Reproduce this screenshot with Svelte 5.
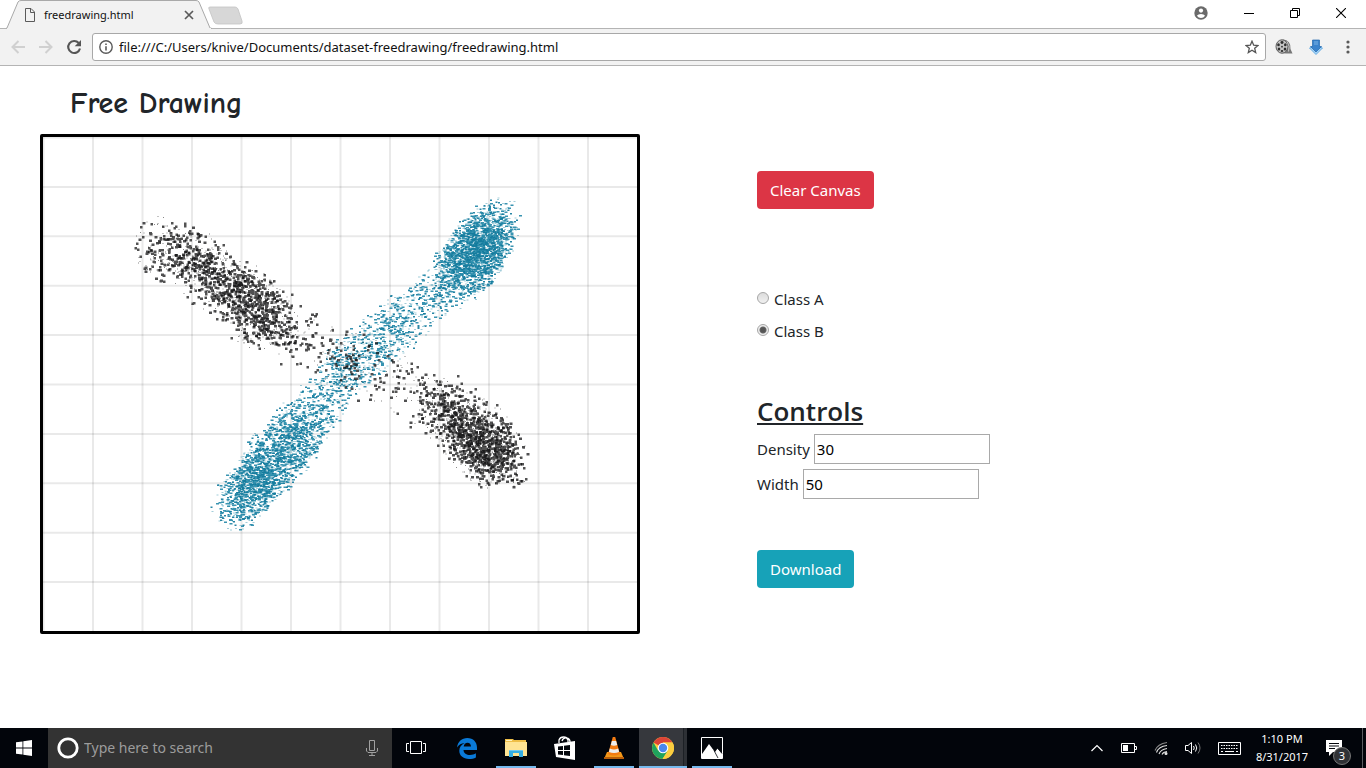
<script>
  let url = $state('file:///C:/Users/knive/Documents/dataset-freedrawing/freedrawing.html');
  let query = $state('');
  let selected = $state('B');
  let density = $state('30');
  let width = $state('50');
  let cleared = $state(false);

  // Small seeded generator, so that the spray is the same on every load.
  function generator(seed) {
    let s = seed;
    return () => {
      s = (s + 0x6d2b79f5) | 0;
      let t = Math.imul(s ^ (s >>> 15), 1 | s);
      t = (t + Math.imul(t ^ (t >>> 7), 61 | t)) ^ t;
      return ((t ^ (t >>> 14)) >>> 0) / 4294967296;
    };
  }

  // Each stroke segment: x1, y1, x2, y2, brush radius, number of dots.
  const strokeA = [
    [114, 105, 148, 123, 26, 200],
    [148, 123, 202, 163, 26, 470],
    [202, 163, 230, 186, 27, 400],
    [230, 186, 300, 220, 26, 110],
    [300, 220, 375, 258, 26, 100],
    [392, 264, 427, 294, 26, 400],
    [427, 294, 458, 327, 27, 720]
  ];
  const strokeB = [
    [453, 84, 442, 104, 29, 420],
    [442, 104, 418, 136, 34, 1300],
    [418, 136, 355, 188, 30, 330],
    [355, 188, 302, 233, 30, 380],
    [302, 233, 260, 290, 28, 300],
    [260, 290, 222, 334, 34, 950],
    [222, 334, 192, 371, 29, 780]
  ];

  function spray(segments, rand, share, w, h, soft) {
    let d = '';
    for (const [x1, y1, x2, y2, r, n] of segments) {
      for (let i = 0; i < n * share; i++) {
        const t = rand();
        let dx = rand() * 2 - 1;
        let dy = rand() * 2 - 1;
        // Part of the dots gather near the middle of the brush.
        if (rand() < soft) {
          dx = (dx + rand() * 2 - 1) / 2;
          dy = (dy + rand() * 2 - 1) / 2;
        }
        if (soft > 0.5 && dx * dx + dy * dy > 0.9) {
          dx *= 0.6;
          dy *= 0.6;
        }
        const x = Math.round((x1 + (x2 - x1) * t + dx * r) * 2) / 2;
        const y = Math.round((y1 + (y2 - y1) * t + dy * r) * 2) / 2;
        d += `M${x - 1} ${y - 1}h${w}v${h}h${-w}z`;
      }
    }
    return d;
  }

  const rand = generator(20170831);
  const layers = [
    { d: spray(strokeB, rand, 0.55, 2, 1, 0.6), fill: '#1681a3', opacity: 0.4 },
    { d: spray(strokeB, rand, 0.42, 3, 1.5, 0.7), fill: '#1681a3', opacity: 0.85 },
    { d: spray(strokeB, rand, 0.34, 2, 1.5, 0.7), fill: '#127a9c', opacity: 0.9 },
    { d: spray(strokeA, rand, 0.5, 1, 1, 0.1), fill: '#111', opacity: 0.5 },
    { d: spray(strokeA, rand, 0.5, 2.5, 2.5, 0.3), fill: '#111', opacity: 0.72 },
    { d: spray(strokeA, rand, 0.32, 3, 2.5, 0.4), fill: '#0c0c0e', opacity: 0.72 }
  ];

  const columns = Array.from({ length: 12 }, (_, i) => i * 49.5 + 0.5);
  const rows = Array.from({ length: 10 }, (_, i) => i * 49.4 + 0.5);
</script>

<div class="screen">
  <header>
    <div class="tabs">
      <div class="tab">
        <svg class="tab-shape" width="206" height="29" viewBox="0 0 206 29" aria-hidden="true">
          <path d="M0 28.5 L1 28 L12 2 Q13 .5 15 .5 H190 Q192 .5 193 2 L204 28 L206 28.5" fill="#f2f2f2" stroke="#a9a9a9" />
          <path d="M1 28.5H205" stroke="#f2f2f2" />
        </svg>
        <svg width="12" height="14" viewBox="0 0 12 14" fill="none" stroke="#5a5a5a" aria-hidden="true">
          <path d="M1.5 .5H7L10.5 4V13.5H1.5ZM6.5 .5V4.5H10.5" />
        </svg>
        <span class="tab-title">freedrawing.html</span>
        <button class="plain" aria-label="Close tab">
          <svg width="10" height="10" viewBox="0 0 10 10" stroke="#5a5a5a" stroke-width="1.7"><path d="M1 1L9 9M9 1L1 9" /></svg>
        </button>
      </div>
      <button class="plain new-tab" aria-label="New tab">
        <svg width="36" height="19" viewBox="0 0 36 19">
          <path d="M2 1H27Q29 1 30 3L34 15Q35 18 32 18H10Q7 18 6 16L1 3Q0 1 2 1Z" fill="#d7d7d7" stroke="#c3c3c3" stroke-width=".8" />
        </svg>
      </button>
      <div class="window-buttons">
        <button class="plain" aria-label="Profile">
          <svg width="14" height="14" viewBox="0 0 14 14"><circle cx="7" cy="7" r="6.7" fill="#6a6a6a" /><circle cx="7" cy="4.6" r="2.1" fill="#fff" /><path d="M2.9 9.8Q4 7.9 7 7.9T11.1 9.8Q9.5 12 7 12T2.9 9.8Z" fill="#fff" /></svg>
        </button>
        <button class="plain" aria-label="Minimize">
          <svg width="10" height="10" viewBox="0 0 10 10"><path d="M0 5.5H10" stroke="#000" /></svg>
        </button>
        <button class="plain" aria-label="Restore">
          <svg width="10" height="10" viewBox="0 0 10 10" fill="none" stroke="#000"><path d="M.5 2.5H7.5V9.5H.5ZM2.5 2V.5H9.5V7.5H8" /></svg>
        </button>
        <button class="plain" aria-label="Close">
          <svg width="10" height="10" viewBox="0 0 10 10" stroke="#000" stroke-width="1.1"><path d="M0 0L10 10M10 0L0 10" /></svg>
        </button>
      </div>
    </div>

    <div class="toolbar">
      <button class="plain nav" aria-label="Back">
        <svg width="16" height="16" viewBox="0 0 16 16" fill="none" stroke="#d0d0d0" stroke-width="2"><path d="M15 8H3M8.5 2L2.5 8L8.5 14" /></svg>
      </button>
      <button class="plain nav" aria-label="Forward">
        <svg width="16" height="16" viewBox="0 0 16 16" fill="none" stroke="#d0d0d0" stroke-width="2"><path d="M1 8H13M7.500 2L13.500 8L7.500 14" /></svg>
      </button>
      <button class="plain nav" aria-label="Reload">
        <svg width="16" height="16" viewBox="0 0 16 16"><path d="M12.700 4A6 6 0 1 0 14 9.500" fill="none" stroke="#555" stroke-width="2.100" /><path d="M15 1V7.300H8.700Z" fill="#555" /></svg>
      </button>
      <div class="address">
        <svg width="14" height="14" viewBox="0 0 14 14" aria-hidden="true"><circle cx="7" cy="7" r="6.200" fill="none" stroke="#5a5a5a" stroke-width="1.400" /><path d="M7 6.200V10.500M7 3.400V5" stroke="#5a5a5a" stroke-width="1.600" /></svg>
        <input type="text" aria-label="Address" bind:value={url} />
        <button class="plain" aria-label="Bookmark this page">
          <svg width="14" height="14" viewBox="0 0 14 14"><path d="M7 1.200L8.700 5.200L13 5.500L9.700 8.300L10.700 12.600L7 10.300L3.300 12.600L4.300 8.300L1 5.500L5.300 5.200Z" fill="none" stroke="#555" stroke-width="1.300" /></svg>
        </button>
      </div>
      <button class="plain tool" aria-label="Film reel extension">
        <svg width="18" height="16" viewBox="0 0 18 16">
          <path d="M8 .5Q16 1 15.500 10L17.500 14.500H11L6 14Z" fill="#777" />
          <ellipse cx="7" cy="7.500" rx="6" ry="6.700" fill="#c4c4c4" stroke="#5a5a5a" />
          <g fill="#2d2d2d"><ellipse cx="7" cy="3.500" rx="1.500" ry="1.400" /><ellipse cx="3.500" cy="5.800" rx="1.300" ry="1.500" /><ellipse cx="4" cy="10" rx="1.300" ry="1.500" /><ellipse cx="10.300" cy="5.800" rx="1.300" ry="1.500" /><ellipse cx="10" cy="10" rx="1.300" ry="1.500" /><ellipse cx="7" cy="12" rx="1.300" ry="1.100" /><circle cx="7" cy="7.700" r=".9" /></g>
          <path d="M12 2.500Q15.500 7 13.500 12.500" stroke="#c9c9c9" fill="none" />
        </svg>
      </button>
      <button class="plain tool" aria-label="Download extension">
        <svg width="14" height="16" viewBox="0 0 14 16">
          <path d="M.5 9L7 15.500L13.500 9L11 8H3Z" fill="#a5d3f6" stroke="#4f9fe0" stroke-width=".8" />
          <path d="M3.500 1H10.500V7.500H12.500L7 13L1.500 7.500H3.500Z" fill="#3a83cc" stroke="#2468ae" stroke-width=".7" />
          <path d="M5 2H9V6H5Z" fill="#5a9bd8" />
        </svg>
      </button>
      <button class="plain tool" aria-label="Menu">
        <svg width="4" height="14" viewBox="0 0 4 14" fill="#5a5a5a"><circle cx="2" cy="2" r="1.600" /><circle cx="2" cy="7" r="1.600" /><circle cx="2" cy="12" r="1.600" /></svg>
      </button>
    </div>
  </header>

  <main>
    <section class="board">
      <h1>Free Drawing</h1>
      <div class="canvas">
        <svg viewBox="0 0 594 494" preserveAspectRatio="none" role="img" aria-label="Drawing canvas">
          <g stroke="#000" stroke-opacity=".085" stroke-width="2">
            {#each columns as x}<path d="M{x} 0V494" />{/each}
            {#each rows as y}<path d="M0 {y}H594" />{/each}
          </g>
          {#if !cleared}
            {#each layers as layer}
              <path d={layer.d} fill={layer.fill} fill-opacity={layer.opacity} />
            {/each}
          {/if}
        </svg>
      </div>
    </section>

    <section class="panel">
      <button class="btn danger" onclick={() => (cleared = true)}>Clear Canvas</button>
      <div class="choices">
        <label><input type="radio" name="class" value="A" bind:group={selected} />Class A</label>
        <label><input type="radio" name="class" value="B" bind:group={selected} />Class B</label>
      </div>
      <h2>Controls</h2>
      <div class="fields">
        <label>Density <input type="text" bind:value={density} /></label>
        <label>Width <input type="text" bind:value={width} /></label>
      </div>
      <button class="btn info">Download</button>
    </section>
  </main>

  <footer>
    <button class="plain start" aria-label="Start">
      <svg width="16" height="16" viewBox="0 0 16 16" fill="#fff"><path d="M0 2.300L6.500 1.400V7.500H0ZM7.300 1.300L16 0V7.500H7.300ZM0 8.400H6.500V14.600L0 13.700ZM7.300 8.400H16V16L7.300 14.700Z" /></svg>
    </button>
    <div class="search">
      <svg width="22" height="22" viewBox="0 0 22 22" aria-hidden="true"><circle cx="11" cy="11" r="9.200" fill="none" stroke="#fff" stroke-width="2.800" /></svg>
      <input type="text" aria-label="Search" placeholder="Type here to search" bind:value={query} />
      <button class="plain" aria-label="Voice search">
        <svg width="12" height="16" viewBox="0 0 12 16" fill="none" stroke="#a0a0a0"><path d="M3.500 .5H8.500V10.500H3.500ZM.5 8V11L2 12.500H10L11.500 11V8M6 12.500V15.500M3 15.500H9" /></svg>
      </button>
    </div>

    <button class="plain app" aria-label="Task view">
      <svg width="20" height="14" viewBox="0 0 20 14" fill="none" stroke="#fff"><path d="M4.500 .5H15.500V12.500H4.500ZM3 2.500H.5V10.500H3M17 2.500H19.500V10.500H17" /></svg>
    </button>
    <div class="pinned">
      <button class="plain app" aria-label="Edge">
        <svg width="20" height="21" viewBox="0 0 20 21"><path d="M0 9.500C.8 3.600 4.800 0 10.300 0C16.300 0 20 4 20 9.800V12H6.500C6.700 15.300 9.500 17 13 17C15.300 17 17.300 16.300 18.900 15.300V19.400C17 20.500 14.700 21 12 21C6 21 2.300 17.500 2.300 12.800C2.300 9.300 4.200 6.600 7.600 5C4.400 5.200 1.700 6.700 0 9.500ZM6.700 8.600H14C13.900 6 12.700 4.700 10.500 4.700C8.500 4.700 7 6.200 6.700 8.600Z" fill="#0a7ad8" fill-rule="evenodd" /></svg>
      </button>
      <button class="plain app open" aria-label="File Explorer">
        <svg width="22" height="20" viewBox="0 0 22 20"><path d="M0 1H8L9 2H21V18H0Z" fill="#efbf48" /><path d="M0 4H22V18H0Z" fill="#ffe493" /><path d="M1 2H7V3H1Z" fill="#fff2c0" /><path d="M4 12H18V19H14V15H8V19H4Z" fill="#35aee4" /><path d="M4 12H18V13H4Z" fill="#72c9ee" /></svg>
      </button>
      <button class="plain app" aria-label="Store">
        <svg width="22" height="24" viewBox="0 0 22 24"><path d="M5 7V4Q6 1 9.500 1T14 4V6M8 5Q9 1.500 12.500 2T16 6" fill="none" stroke="#fff" stroke-width="1.300" /><path d="M0 8L21 5V24L2 21Z" fill="#fff" /><path d="M4 10.500L9 10V14H4ZM10 9.800L16 9V14H10ZM4 15H9V19L4 18.500ZM10 15H16V20L10 19.200Z" fill="#04070c" /></svg>
      </button>
      <button class="plain app open" aria-label="VLC">
        <svg width="20" height="22" viewBox="0 0 20 22"><path d="M3 15H17L20 22H0Z" fill="#f49819" /><path d="M0 20H20V22H0Z" fill="#b95d08" /><path d="M8.800 0H11.200L16 17Q10 20 4 17Z" fill="#f47c12" /><path d="M7.900 4H12.100L13.200 8Q10 9.300 6.800 8ZM5.800 11.500Q10 13.300 14.200 11.500L15.100 15Q10 17 4.900 15Z" fill="#eee" /></svg>
      </button>
      <button class="plain app active" aria-label="Chrome">
        <svg width="22" height="22" viewBox="0 0 22 22"><circle cx="11" cy="11" r="11" fill="#fccd3f" /><path d="M11 11L1.500 5.500A11 11 0 0 1 20.500 5.500H11Z" fill="#dc4437" /><path d="M1.500 5.500A11 11 0 0 0 10.500 22L15.800 13.800L11 11L6 13.500Z" fill="#1fa35d" /><path d="M11 5.500H20.500A11 11 0 0 1 10.500 22L15.800 13.800Z" fill="#fccd3f" /><circle cx="11" cy="11" r="5.300" fill="#fff" /><circle cx="11" cy="11" r="4.200" fill="#4a87ee" /></svg>
      </button>
      <button class="plain app open" aria-label="Photos">
        <svg width="22" height="22" viewBox="0 0 22 22"><path d="M.5 .5H21.500V21.500H.5Z" fill="#04070c" stroke="#fff" /><path d="M1 17L8 7L14 15L16.500 11.500L21 16.500V21H1Z" fill="#fff" /><path d="M11.500 11L14.500 8.500L21 16.500M13 13.500L17 21" fill="none" stroke="#04070c" stroke-width=".8" /></svg>
      </button>
    </div>

    <div class="tray">
      <button class="plain" aria-label="Show hidden icons">
        <svg width="12" height="8" viewBox="0 0 12 8" fill="none" stroke="#fff" stroke-width="1.200"><path d="M.5 7L6 1.500L11.500 7" /></svg>
      </button>
      <button class="plain" aria-label="Battery">
        <svg width="16" height="10" viewBox="0 0 16 10"><path d="M.5 .5H13.500V9.500H.5ZM14 3.500H15.500V6.500H14" fill="none" stroke="#fff" /><path d="M2 2H7V8H2Z" fill="#fff" /></svg>
      </button>
      <button class="plain" aria-label="Network">
        <svg width="14" height="14" viewBox="0 0 14 14" fill="none" stroke="#ddd" stroke-width="1.100"><path d="M1 9.500Q3.500 3 13 1.500" stroke="#888" /><path d="M2.500 11.500Q4.500 5.500 13 4.500M5 13Q6.500 8.500 13 7.500M8 13.500Q9 11 13 10.500" /><circle cx="12" cy="12.500" r="1" fill="#fff" /></svg>
      </button>
      <button class="plain" aria-label="Volume">
        <svg width="17" height="14" viewBox="0 0 17 14" fill="none" stroke="#fff"><path d="M.5 4.500H3L6.500 1.500V12.500L3 9.500H.5ZM8.500 5Q10 7 8.500 9M10.500 3.500Q13 7 10.500 10.500" /><path d="M13 1.500Q17 7 13 12.500" stroke="#777" /></svg>
      </button>
      <button class="plain" aria-label="Touch keyboard">
        <svg width="23" height="13" viewBox="0 0 23 13" fill="none" stroke="#fff"><path d="M.5 .5H22.500V12.500H.5Z" /><path d="M3 3.500H20M3 6.500H20" stroke-dasharray="1.500 1" /><path d="M3 9.500H5M7 9.500H16M18 9.500H20" /></svg>
      </button>
      <div class="clock"><span>1:10 PM</span><span>8/31/2017</span></div>
      <button class="plain notice" aria-label="Notifications">
        <svg width="16" height="16" viewBox="0 0 16 16"><path d="M0 0H16V12H7L3 16V12H0Z" fill="#fff" /><path d="M3 3.500H13M3 6H13M3 8.500H9" stroke="#04070c" /></svg>
        <span class="badge">3</span>
      </button>
      <button class="plain desktop" aria-label="Show desktop"></button>
    </div>
  </footer>
</div>

<style>
  :global(body) {
    margin: 0;
    background: #fff;
  }
  .screen {
    min-height: 100vh;
    display: flex;
    flex-direction: column;
    font-family: 'Segoe UI', 'Noto Sans', 'Open Sans', sans-serif;
    font-size: 15px;
    line-height: 24px;
    color: #212529;
  }
  svg {
    display: block;
    flex: none;
  }
  .plain {
    display: flex;
    align-items: center;
    justify-content: center;
    padding: 0;
    border: 0;
    background: none;
    color: inherit;
    font: inherit;
  }

  .tabs {
    display: flex;
    height: 28px;
    padding: 0 2px 0 6px;
  }
  .tab {
    position: relative;
    z-index: 1;
    display: flex;
    align-items: center;
    box-sizing: border-box;
    width: 206px;
    height: 29px;
    padding: 0 18px;
  }
  .tab-shape {
    position: absolute;
    inset: 0;
    z-index: -1;
  }
  .tab-title {
    flex: 1;
    margin-left: 8px;
    font-size: 11px;
    line-height: 16px;
    color: #111;
  }
  .new-tab {
    height: 31px;
    margin-left: -4px;
  }
  .window-buttons {
    display: flex;
    margin-left: auto;
  }
  .window-buttons button {
    width: 46px;
    height: 26px;
  }
  .window-buttons button:first-child {
    width: 50px;
  }
  .toolbar {
    display: flex;
    align-items: center;
    box-sizing: border-box;
    height: 38px;
    padding: 0 2px 0 4px;
    background: #f2f2f2;
    border-top: 1px solid #b4b4b4;
    border-bottom: 1px solid #b4b4b4;
  }
  .nav {
    width: 28px;
    height: 28px;
  }
  .tool {
    width: 32px;
    height: 28px;
  }
  .address {
    flex: 1;
    display: flex;
    align-items: center;
    gap: 6px;
    box-sizing: border-box;
    height: 28px;
    margin: 0 2px 0 4px;
    padding: 0 6px;
    background: #fff;
    border: 1px solid #a8a8a8;
    border-radius: 3px;
  }
  .address input {
    flex: 1;
    min-width: 0;
    padding: 0;
    border: 0;
    outline: 0;
    background: none;
    font: 13px/20px 'Segoe UI', 'Noto Sans', 'Open Sans', sans-serif;
    color: #111;
  }

  main {
    flex: 1;
    display: grid;
    grid-template-columns: 1fr 1fr;
  }
  .board {
    padding: 18px 0 16px 40px;
  }
  h1 {
    margin: 0 0 10px 30px;
    font-family: 'Comic Sans MS', 'Comic Neue', cursive;
    font-size: 30px;
    line-height: 40px;
    font-weight: 700;
  }
  .canvas {
    box-sizing: border-box;
    width: 100%;
    max-width: 600px;
    aspect-ratio: 6 / 5;
    border: 3px solid #000;
    border-radius: 2px;
  }
  .canvas svg {
    width: 100%;
    height: 100%;
  }
  .panel {
    display: flex;
    flex-direction: column;
    align-items: flex-start;
    padding: 105px 16px 16px 74px;
  }
  .btn {
    height: 38px;
    padding: 0 13px;
    border: 0;
    border-radius: 4px;
    color: #fff;
    font: inherit;
  }
  .danger {
    background: #dc3545;
  }
  .info {
    background: #17a2b8;
  }
  .choices {
    display: grid;
    gap: 8px;
    margin: 78px 0 52px;
  }
  .choices label {
    display: flex;
    align-items: center;
    gap: 5px;
  }
  .choices input {
    appearance: none;
    box-sizing: border-box;
    width: 12px;
    height: 12px;
    margin: 0 0 2px;
    border: 1px solid #a6a6a6;
    border-radius: 50%;
    background: linear-gradient(#dcdcdc, #f0f0f0);
  }
  .choices input:checked {
    background: radial-gradient(circle, #555 0 2px, #666 3px, #eee 4px);
  }
  h2 {
    margin: 0 0 7px;
    font-family: 'Segoe UI', 'Open Sans', 'Noto Sans', sans-serif;
    font-size: 26px;
    line-height: 32px;
    font-weight: 600;
    text-decoration: underline;
    text-decoration-thickness: 2px;
    text-underline-offset: 2px;
    text-decoration-skip-ink: none;
  }
  .fields {
    display: grid;
    gap: 5px;
    margin-bottom: 51px;
  }
  .fields label {
    display: flex;
    align-items: center;
    gap: 4px;
  }
  .fields input {
    box-sizing: border-box;
    width: 176px;
    height: 30px;
    padding: 0 2px;
    border: 1px solid #a9a9a9;
    font: inherit;
    color: #000;
  }

  footer {
    display: flex;
    height: 40px;
    background: #02050b;
    color: #fff;
  }
  .start {
    width: 48px;
  }
  .search {
    display: flex;
    align-items: center;
    box-sizing: border-box;
    width: 344px;
    padding: 0 14px 0 9px;
    background: #333;
  }
  .search input {
    flex: 1;
    min-width: 0;
    padding: 0 5px;
    border: 0;
    outline: 0;
    background: none;
    font: inherit;
    font-size: 14px;
    color: #fff;
  }
  .search input::placeholder {
    color: #9c9c9c;
    opacity: 1;
  }
  .app {
    position: relative;
    width: 48px;
    height: 40px;
  }
  .pinned {
    display: flex;
    gap: 1px;
    margin-left: 3px;
  }
  .open::after,
  .active::after {
    content: '';
    position: absolute;
    left: 4px;
    right: 4px;
    bottom: 0;
    height: 2px;
    background: #76b9ed;
  }
  .active {
    background: linear-gradient(90deg, #36383d 44px, #1c2025 44px 45px, #2d3035 45px);
  }
  .active::after {
    left: 0;
    right: 0;
  }
  .tray {
    display: flex;
    align-items: center;
    margin-left: auto;
  }
  .tray button {
    width: 32px;
    height: 40px;
  }
  .tray button:nth-child(5) {
    width: 40px;
  }
  .clock {
    display: grid;
    width: 66px;
    font-size: 11px;
    line-height: 18px;
    text-align: center;
  }
  .tray .notice {
    position: relative;
    width: 38px;
    margin-right: 9px;
  }
  .badge {
    position: absolute;
    left: 18px;
    top: 19px;
    width: 16px;
    height: 16px;
    border: 1px solid #777;
    border-radius: 50%;
    background: #303236;
    font-size: 11px;
    line-height: 16px;
  }
  .tray .desktop {
    width: 4px;
    border-left: 1px solid #5a5c60;
  }
</style>
